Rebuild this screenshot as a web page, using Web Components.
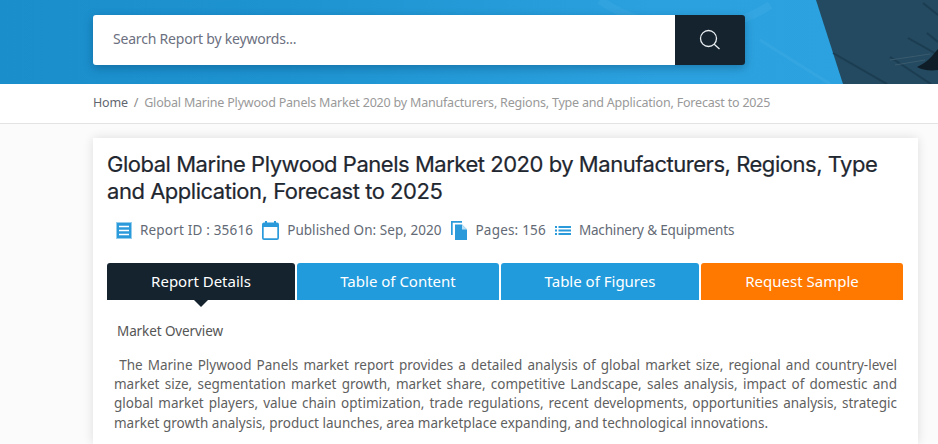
<!DOCTYPE html>
<html>
<head>
<meta charset="utf-8">
<title>Global Marine Plywood Panels Market</title>
<style>
	html, body { margin: 0; height: 100%; overflow: hidden; }
	body {
		background: #fbfbfb;
		color: #5a5a5a;
		font-family: "Noto Sans", sans-serif;
	}
</style>
</head>
<body>

<search-banner placeholder="Search Report by keywords..."></search-banner>

<bread-crumb>
	<a href="#">Home</a>
	<span slot="current">Global Marine Plywood Panels Market 2020 by Manufacturers, Regions, Type and Application, Forecast to 2025</span>
</bread-crumb>

<report-card>
	<span slot="title">Global Marine Plywood Panels Market 2020 by Manufacturers, Regions, Type and Application, Forecast to 2025</span>

	<meta-item slot="meta" icon="receipt" style="letter-spacing:.18px">Report ID : 35616</meta-item>
	<meta-item slot="meta" icon="calendar" style="letter-spacing:.04px">Published On: Sep, 2020</meta-item>
	<meta-item slot="meta" icon="pages" style="letter-spacing:.2px;margin-left:1px">Pages: 156</meta-item>
	<meta-item slot="meta" icon="list" style="letter-spacing:-.18px">Machinery &amp; Equipments</meta-item>

	<tab-button slot="tabs" kind="active" style="width:188px">Report Details</tab-button>
	<tab-button slot="tabs" style="width:202px">Table of Content</tab-button>
	<tab-button slot="tabs" style="width:198px">Table of Figures</tab-button>
	<tab-button slot="tabs" kind="sample" style="width:202px">Request Sample</tab-button>

	<h2>Market Overview</h2>
	<p>&nbsp;The Marine Plywood Panels market report provides a detailed analysis of global market size, regional and country-level market size, segmentation market growth, market share, competitive Landscape, sales analysis, impact of domestic and global market players, value chain optimization, trade regulations, recent developments, opportunities analysis, strategic market growth analysis, product launches, area marketplace expanding, and technological innovations.</p>
</report-card>

<script>
class SearchBanner extends HTMLElement {
	constructor() {
		super();
		this.attachShadow({mode:'open'});
		this.shadowRoot.innerHTML = `
			<style>
				:host {
					display: block;
					position: relative;
					height: 84px;
					box-sizing: border-box;
					padding: 15px 0 0 93px;
					overflow: hidden;
					background: linear-gradient(90deg, #1a8ecb 0%, #1d93d0 30%, #2ba2df 70%, #2ca3e0 100%);
				}
				form {
					display: flex;
					width: 652px;
					height: 50px;
					border-radius: 3px;
					box-shadow: 0 3px 10px rgba(10,60,100,.4);
					position: relative;
				}
				input {
					flex: 1;
					min-width: 0;
					border: 0;
					outline: none;
					padding: 0 20px 3px;
					background: #fff;
					border-radius: 3px 0 0 3px;
					font: 14px "Noto Sans", sans-serif;
					letter-spacing: -.2px;
				}
				input::placeholder { color: #6c7080; opacity: 1; }
				button {
					width: 70px;
					border: 0;
					padding: 0;
					background: #14232e;
					border-radius: 0 3px 3px 0;
					display: flex;
					align-items: center;
					justify-content: center;
				}
				.art { position: absolute; left: 0; top: 0; }
			</style>
			<svg class="art" width="938" height="84" viewBox="0 0 938 84" fill="none">
				<path d="M600 0C640 30 720 40 770 5" stroke="#fff" stroke-opacity=".04" stroke-width="8"/>
				<path d="M760 40L830 84" stroke="#fff" stroke-opacity=".04" stroke-width="3"/>
				<path d="M816 0H938V84H843Z" fill="#234a60"/>
				<g stroke="#1a3a4e" stroke-width="2" stroke-opacity=".8">
					<path d="M833 53L887 84M890 57L931 84M908 38L938 55M927 33L938 42M923 3L938 15"/>
				</g>
				<path d="M890 60L930 54M895 65L925 60" stroke="#3a5a6e" stroke-width="1"/>
				<path d="M917 67C928 62 932 56 938 49V70C930 71 922 70 917 67Z" fill="#0f1d28"/>
			</svg>
			<form>
				<input type="text" placeholder="${this.getAttribute('placeholder')}">
				<button type="button" aria-label="Search">
					<svg width="22" height="22" viewBox="0 0 22 22" fill="none" stroke="#e8edf0" stroke-width="1.3">
						<circle cx="9.5" cy="9.5" r="8"/>
						<path d="M15.200 15.200L20.500 20"/>
					</svg>
				</button>
			</form>
		`;
	}
}

class BreadCrumb extends HTMLElement {
	constructor() {
		super();
		this.attachShadow({mode:'open'});
		this.shadowRoot.innerHTML = `
			<style>
				:host {
					display: flex;
					align-items: center;
					height: 37px;
					padding: 0 0 2px 93px;
					background: #fff;
					border-bottom: 1px solid #e3e3e3;
					font-size: 12.5px;
					letter-spacing: -.2px;
					white-space: nowrap;
				}
				::slotted(a) { color: #5f6670; text-decoration: none; }
				.sep { color: #8a8a8a; padding: 0 6px; }
				.current { color: #999; }
			</style>
			<slot></slot><span class="sep">/</span><span class="current"><slot name="current"></slot></span>
		`;
	}
}

const ICONS = {
	receipt: [16, 17, '<rect x="1" y="1" width="14" height="15"/><rect x=".5" y=".5" width="15" height="16" fill="none" stroke="#2b9adb" stroke-dasharray="1 1"/><path d="M3 4.500h10M3 8.500h10M3 12.500h10" stroke="#fff" stroke-width="1.500"/>'],
	calendar: [17, 19, '<path fill-rule="evenodd" d="M3 0h2v1.500h7V0h2v1.500h1a2 2 0 0 1 2 2V17a2 2 0 0 1-2 2H2a2 2 0 0 1-2-2V3.500a2 2 0 0 1 2-2h1zM1.700 6v11.300h13.600V6z"/>'],
	pages: [16, 19, '<path d="M0 0h11v1.700H1.700V14H0z"/><path d="M4 3.500h7l5 5V19H4z"/><path d="M11 3.500V8.500h5z" fill="#bfe1f5"/>'],
	list: [16, 9, '<path d="M0 0h2v2H0zM0 3.500h2v2H0zM0 7h2v2H0zM3.500 0H16v2H3.500zM3.500 3.500H16v2H3.500zM3.500 7H16v2H3.500z"/>']
};

class MetaItem extends HTMLElement {
	constructor() {
		super();
		this.attachShadow({mode:'open'});
		const [w, h, paths] = ICONS[this.getAttribute('icon')];
		this.shadowRoot.innerHTML = `
			<style>
				:host {
					display: inline-flex;
					align-items: center;
					gap: 8px;
					font-size: 13.5px;
					color: #636a75;
					white-space: nowrap;
				}
				svg { fill: #2b9adb; flex: none; }
			</style>
			<svg width="${w}" height="${h}" viewBox="0 0 ${w} ${h}">${paths}</svg>
			<slot></slot>
		`;
	}
}

class TabButton extends HTMLElement {
	constructor() {
		super();
		this.attachShadow({mode:'open'});
		this.shadowRoot.innerHTML = `
			<style>
				:host {
					display: flex;
					align-items: center;
					justify-content: center;
					height: 35px;
					padding-bottom: 2px;
					position: relative;
					flex: none;
					color: #fff;
					font-size: 15px;
					background: #219bdc;
					border-radius: 3px 3px 0 0;
				}
				:host([kind=active]) { background: #14232e; }
				:host([kind=sample]) { background: #ff7800; }
				:host([kind=active])::after {
					content: "";
					position: absolute;
					left: 50%;
					top: 100%;
					margin-left: -7px;
					border: 7px solid transparent;
					border-top-color: #14232e;
					border-bottom: 0;
				}
			</style>
			<slot></slot>
		`;
	}
}

class ReportCard extends HTMLElement {
	constructor() {
		super();
		this.attachShadow({mode:'open'});
		this.shadowRoot.innerHTML = `
			<style>
				:host {
					display: block;
					box-sizing: border-box;
					width: 825px;
					margin: 14px 0 0 93px;
					padding: 13px 14px 0;
					height: 306px;
					background: #fff;
					box-shadow: 0 0 10px rgba(0,0,0,.12);
				}
				h1 {
					margin: 0;
					font: 400 22px/27px Inter, sans-serif;
					color: #1f2730;
					-webkit-text-stroke: .2px #1f2730;
					letter-spacing: -.47px;
				}
				.meta { display: flex; align-items: center; gap: 9px; margin: 14px 0 0 9px; height: 22px; }
				.tabs { display: flex; gap: 2px; margin-top: 22px; }
				.body { padding: 0 7px; margin-top: 21px; }
				::slotted(h2) {
					margin: 0 0 0 3px;
					font-size: 13.5px;
					font-weight: 400;
					line-height: 20px;
					color: #555;
					letter-spacing: -.1px;
				}
				::slotted(p) {
					margin: 15px 0 0;
					font-size: 13.5px;
					line-height: 19.2px;
					color: #5f5f5f;
					text-align: justify;
				}
			</style>
			<h1><slot name="title"></slot></h1>
			<div class="meta"><slot name="meta"></slot></div>
			<div class="tabs"><slot name="tabs"></slot></div>
			<div class="body"><slot></slot></div>
		`;
	}
}

customElements.define('search-banner', SearchBanner);
customElements.define('bread-crumb', BreadCrumb);
customElements.define('meta-item', MetaItem);
customElements.define('tab-button', TabButton);
customElements.define('report-card', ReportCard);
</script>
</body>
</html>
